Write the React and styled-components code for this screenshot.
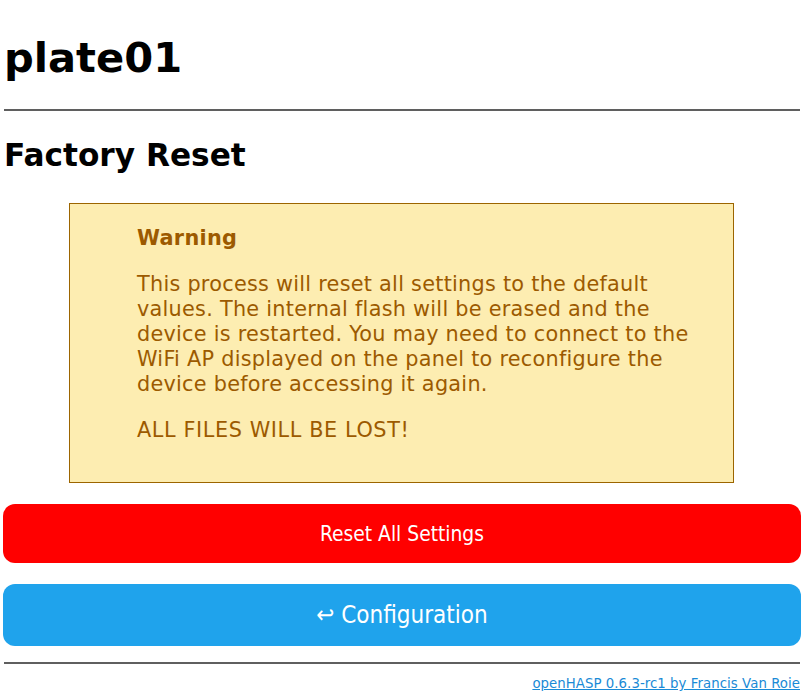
import styled, { createGlobalStyle } from 'styled-components'

const GlobalStyle = createGlobalStyle`
  body {
    margin: 0;
    background: #ffffff;
    font-family: "DejaVu Sans", Verdana, sans-serif;
    font-size: 20.8px;
    color: #000000;
  }
`;

const Page = styled.div`
  padding: 0 10px 0 4px;
  display: flex;
  flex-direction: column;
`;

const Title = styled.h1`
  font-size: 41.6px;
  font-weight: 700;
  margin: 33px 0 26px;
  line-height: 1.2;
`;

const Rule = styled.hr`
  border: none;
  border-top: 2px solid #5f5f5f;
  margin: 0;
  width: 100%;
`;

const SubTitle = styled.h2`
  font-size: 31.2px;
  font-weight: 700;
  margin: 26px 0 29px;
  line-height: 1.2;
`;

const WarningBox = styled.div`
  margin: 0 66px 0 65px;
  background: #fdedb1;
  border: 1px solid #9c6500;
  color: #9c5a00;
  padding: 22px 36px 22px 67px;
  line-height: 25px;
  letter-spacing: 0.26px;
`;

const WarningHead = styled.div`
  font-weight: 700;
  margin-bottom: 21px;
  letter-spacing: 0.3px;
`;

const Para = styled.p`
  margin: 0 0 21px;
  &:last-child {
    margin-bottom: 17px;
    letter-spacing: 0.6px;
  }
`;

const Button = styled.button`
  display: block;
  width: calc(100% + 2px);
  margin-left: -1px;
  border: none;
  border-radius: 12px;
  color: #ffffff;
  background: ${(p) => p.$bg};
  height: ${(p) => p.$h}px;
  font-family: "DejaVu Sans Condensed", "DejaVu Sans", sans-serif;
  font-size: ${(p) => p.$fs}px;
  cursor: pointer;
  padding: 0;
`;

const ButtonGap = styled.div`
  height: ${(p) => p.$h}px;
`;

const Footer = styled.div`
  display: flex;
  justify-content: flex-end;
  padding: 12px 0 0;
  font-size: 13.3px;
  letter-spacing: 0.05px;
`;

const FooterLink = styled.a`
  color: #1a8ad6;
  text-decoration: underline;
`;

export default function App() {
  return (
    <Page>
      <GlobalStyle />
      <Title>plate01</Title>
      <Rule />
      <SubTitle>Factory Reset</SubTitle>
      <WarningBox>
        <WarningHead>Warning</WarningHead>
        <Para>
          This process will reset all settings to the default values. The internal flash will be erased and the
          device is restarted. You may need to connect to the WiFi AP displayed on the panel to reconfigure the
          device before accessing it again.
        </Para>
        <Para>ALL FILES WILL BE LOST!</Para>
      </WarningBox>
      <ButtonGap $h={21} />
      <Button $bg="#ff0000" $h={59} $fs={20.8}>Reset All Settings</Button>
      <ButtonGap $h={21} />
      <Button $bg="#1fa3ec" $h={62} $fs={24}>↩ Configuration</Button>
      <ButtonGap $h={16} />
      <Rule />
      <Footer>
        <FooterLink href="#">openHASP 0.6.3-rc1 by Francis Van Roie</FooterLink>
      </Footer>
    </Page>
  )
}
